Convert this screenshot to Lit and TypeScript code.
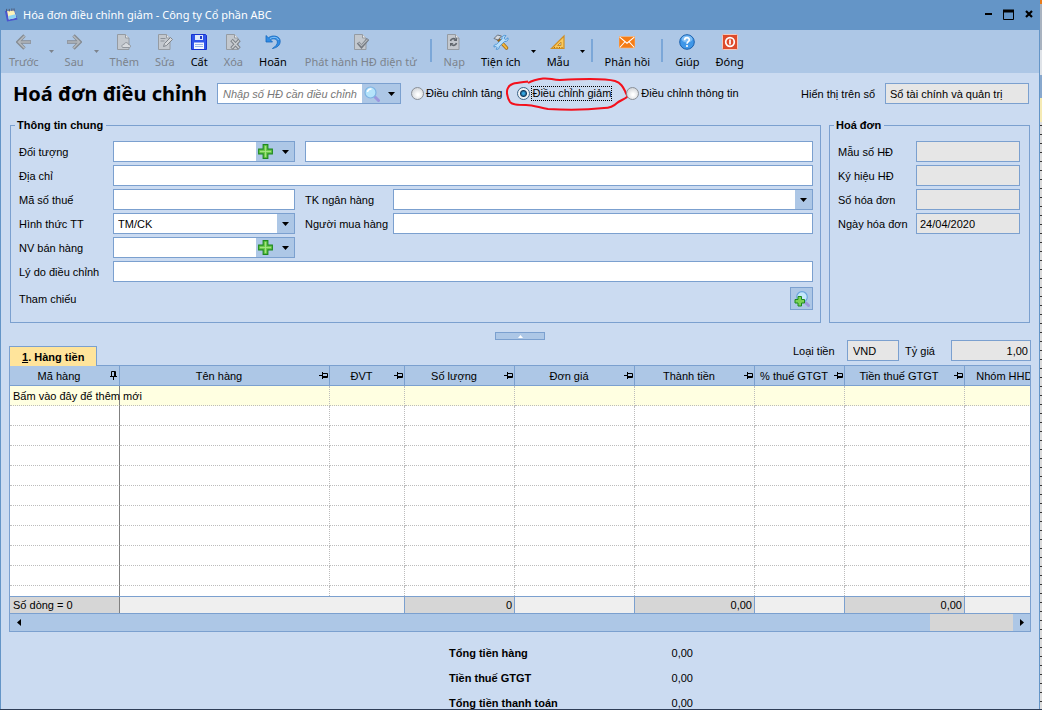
import { LitElement, html, svg, css, nothing, TemplateResult } from "lit";
import { customElement, state } from "lit/decorators.js";
import { classMap } from "lit/directives/class-map.js";

type Pic = TemplateResult;

const icon = (body: unknown, size = 16): Pic =>
  html`<svg class="icon" width=${size} height=${size} viewBox="0 0 16 16" aria-hidden="true">${body}</svg>`;

const page = svg`<path d="M1.500.5h8l3.500 3.500v11.500H1.500z" fill="#c3c8ce" stroke="#959ba2"/><path d="M9.500.5v3.500h3.500" fill="#e8eaec" stroke="#959ba2"/>`;

const pictures: Record<string, Pic> = {
  back: icon(svg`<path d="M8.500 1.500 2 8l6.500 6.500M2.500 8H15" fill="none" stroke="#858b92" stroke-width="3.400"/><path d="M8.500 2 2.500 8l6 6M3 8h11.500" fill="none" stroke="#b3b8bd" stroke-width="1.600"/>`),
  next: icon(svg`<path d="M7.500 1.500 14 8l-6.500 6.500M13.500 8H1" fill="none" stroke="#858b92" stroke-width="3.400"/><path d="M7.500 2l6 6-6 6M13 8H1.500" fill="none" stroke="#b3b8bd" stroke-width="1.600"/>`),
  add: icon(svg`${page}<path d="M6.500 13.500c-1.500-2 .5-3.500 1.500-3 .5-2.500 4-2.500 4.500 0 2.500 0 2.500 3 1 3z" fill="#d7dade" stroke="#8f959c"/>`),
  edit: icon(svg`${page}<path d="M3.500 4.500h5M3.500 7h4" stroke="#8b9199"/><path d="m6.500 12.500 1-3 6-6 2 2-6 6z" fill="#d5d8db" stroke="#7f858c"/>`),
  save: icon(svg`<path d="M.5.500h14l1 1v14H.5z" fill="#2f55ea" stroke="#1733d0"/><path d="M4 1h8v5H4z" fill="#dfe9fb"/><path d="M9 2h2v3H9z" fill="#2340c8"/><path d="M3 8.500h10V15H3z" fill="#f4f7fd"/><path d="M4 10.500h8M4 12.500h8" stroke="#9bb4e6"/>`),
  remove: icon(svg`${page}<path d="m6.500 6 8 8.500M14.500 6l-8 8.500" stroke="#7d838a" stroke-width="3.400"/><path d="m7 6.500 7 7.500M14 6.500 7 14" stroke="#ccd0d3" stroke-width="1.400"/>`),
  undo: icon(svg`<path d="M1 1.500v6.500h6.500L5.400 5.800c3-2 7-.8 7 2.200 0 2.400-1.600 4.300-5 6.500 5-.8 7.800-3.500 7.800-7.200C15.200 2.200 8.200.3 3.300 3.700z" fill="#2f8ce6" stroke="#1768bd" stroke-width=".8"/><path d="M5 4.500c3.500-2 7.500-1.500 8.500 1.500" fill="none" stroke="#8cc8fa"/>`),
  publish: icon(svg`${page}<path d="m5 8.500 3.500 4L15 5" fill="none" stroke="#747a81" stroke-width="3.200"/><path d="m5.500 8.500 3 3.200L14.500 5.500" fill="none" stroke="#b6bbc0" stroke-width="1.200"/>`),
  reload: icon(svg`${page}<path d="M4.500 7C5 4.500 8 4 9.500 5.500M10.500 9c-.5 2.500-3.500 3-5 1.500" fill="none" stroke="#5f656c" stroke-width="1.600"/><path d="M11 3.500v3.500H7.500zM4 12.500V9h3.500z" fill="#5f656c"/>`),
  tools: icon(svg`<path d="m5 5 8.500 9" stroke="#9a6410" stroke-width="3.400" stroke-linecap="round"/><path d="m8 8 5.500 6" stroke="#f2b63c" stroke-width="2" stroke-linecap="round"/><path d="M1 4.500 4.500 1l4 1-3.500 4z" fill="#d6d9de" stroke="#6b7480"/><path d="M15 3.800 12.600 5.700 11 4.200 13 1.500c-2.500-.8-4.600 1.200-4 3.500L3.500 10.300c-1.500-.3-3 1-2.500 2.800l1.700-.8 1.500 1.500-1 1.500c2 .6 3.300-1 3-2.600L11.500 7.500c2.300.5 4.200-1.300 3.500-3.700z" fill="#b8defa" stroke="#3d8bd0" stroke-width=".8"/>`),
  ruler: icon(svg`<path d="M1.500 14.500 14 2v12.500z" fill="#f9c95e" stroke="#cf8f24" stroke-width="1.200"/><path d="M7.500 11.500 11 8v3.500z" fill="#adc8e6" stroke="#cf8f24"/><path d="M4.500 14v-1M7 14v-1M9.500 14v-1M12 14v-1" stroke="#a66c12"/>`),
  mail: icon(svg`<path d="M0 2.500h16v11.500H0z" fill="#f57c14" stroke="#f8c08c" stroke-width=".6"/><path d="m.7 3.200 7.300 6 7.300-6M.7 13.500l5-5.500M15.300 13.500l-5-5.500" fill="none" stroke="#fff" stroke-width="1.100"/>`),
  help: icon(svg`<circle cx="8" cy="8" r="7.300" fill="#3f97e8" stroke="#1a60ad"/><ellipse cx="8" cy="5" rx="5.500" ry="3.500" fill="#7dbdf5"/><path d="M5.600 6.200C5.700 2.700 10.500 3 10.300 6 10.200 7.600 8 7.700 8 9.800" fill="none" stroke="#fff" stroke-width="1.700"/><circle cx="8" cy="12" r="1.100" fill="#fff"/>`),
  close: icon(svg`<rect x=".5" y=".5" width="15" height="15" rx="1" fill="#dd4b2c" stroke="#f5c9bc"/><circle cx="8" cy="8" r="4.300" fill="none" stroke="#fff" stroke-width="1.700"/><path d="M8 5.500v5" stroke="#fff" stroke-width="1.700"/>`),
  plus: icon(svg`<path d="M5.500.7h5v4.800h4.800v5h-4.800v4.800h-5v-4.800H.7v-5h4.800z" fill="#6cc94a" stroke="#1d8a1d" stroke-width="1.200"/><path d="M8 2v12M2 8h12" stroke="#a4e585"/>`, 15),
  search: icon(svg`<path d="m10.500 10.500 4 4" stroke="#9c97dd" stroke-width="3" stroke-linecap="round"/><circle cx="6.500" cy="6.500" r="5.500" fill="#b4e3fb" stroke="#7cb2e2" stroke-width="1.200"/><path d="M3.500 6a3.500 3.500 0 0 1 4-3" fill="none" stroke="#fff" stroke-width="1.600"/>`),
  searchAdd: icon(svg`<path d="m12 12 2.500 2.500" stroke="#9c97dd" stroke-width="3" stroke-linecap="round"/><circle cx="8" cy="6" r="5.300" fill="#c4e7fb" stroke="#6ba6dc" stroke-width="1.200"/><path d="M4 5.500h3.500v3h3V12h-3v3H4v-3H1V8.500h3z" fill="#7bd255" stroke="#1d8a1d"/>`),
  app: icon(svg`<path d="m1 3.500 10.500-1.500 4 11-12 2.500z" fill="#4a55cf"/><path d="m3.500 3.500 8-1 2.500 8.500-8.500 2z" fill="#fff3b8"/><path d="m5 9 8-2 1 4-8.500 2z" fill="#8dd3f5"/><path d="M3 4V1M6 4V1M9 3.500v-3M11.500 3.500v-3" stroke="#4a4f63"/>`, 14),
};

const caret = html`<svg class="caret" width="7" height="4" viewBox="0 0 7 4" aria-hidden="true"><path d="M0 0h7L3.500 4z" fill="currentColor"/></svg>`;
const pinUp = html`<svg class="pin" width="9" height="9" viewBox="0 0 9 9" aria-hidden="true"><path d="M2.500 5V.5h4V5M5.500 0v5M1 5.500h7M4.500 6v3" fill="none" stroke="#000"/></svg>`;
const pinSide = html`<svg class="pin" width="9" height="7" viewBox="0 0 9 7" aria-hidden="true"><path d="M4 1.500h4.500v4H4M4 4.500h4.500M3.500 0v7M0 3.500h3" fill="none" stroke="#000"/></svg>`;

interface Tool { text: string; pic: string; off?: boolean; menu?: boolean; rule?: boolean; long?: boolean }
const tools: Tool[] = [
  { text: "Trước", pic: "back", off: true, menu: true },
  { text: "Sau", pic: "next", off: true, menu: true },
  { text: "Thêm", pic: "add", off: true },
  { text: "Sửa", pic: "edit", off: true },
  { text: "Cất", pic: "save" },
  { text: "Xóa", pic: "remove", off: true },
  { text: "Hoãn", pic: "undo" },
  { text: "Phát hành HĐ điện tử", pic: "publish", off: true, rule: true, long: true },
  { text: "Nạp", pic: "reload", off: true },
  { text: "Tiện ích", pic: "tools", menu: true },
  { text: "Mẫu", pic: "ruler", menu: true, rule: true },
  { text: "Phản hồi", pic: "mail", rule: true },
  { text: "Giúp", pic: "help" },
  { text: "Đóng", pic: "close" },
];

const columns = [
  { text: "Mã hàng", width: 110 },
  { text: "Tên hàng", width: 210 },
  { text: "ĐVT", width: 75 },
  { text: "Số lượng", width: 110 },
  { text: "Đơn giá", width: 120 },
  { text: "Thành tiền", width: 120 },
  { text: "% thuế GTGT", width: 90 },
  { text: "Tiền thuế GTGT", width: 120 },
  { text: "Nhóm HHDV", width: 98 },
];

const totals = [
  ["Tổng tiền hàng", "0,00"],
  ["Tiền thuế GTGT", "0,00"],
  ["Tổng tiền thanh toán", "0,00"],
];

const modes = ["Điều chỉnh tăng", "Điều chỉnh giảm", "Điều chỉnh thông tin"];

@customElement("app-root")
export class AppRoot extends LitElement {
  @state() private mode = 1;

  static styles = css`
    :host {
      display: flex;
      height: 100vh;
      box-sizing: border-box;
      border-bottom: 1px solid #2f3d57;
      overflow: hidden;
      font: 11px/14px "Liberation Sans", Arial, sans-serif;
      color: #000;
      --line: #7ba0cf;
      --bar: #adc7e6;
      --frame: #6495c7;
    }
    *, *::before { box-sizing: border-box; }
    button, input, select { font: inherit; color: inherit; margin: 0; border-radius: 0; }
    button { border: 0; padding: 0; background: none; white-space: nowrap; }
    svg { display: block; flex: none; }
    .window {
      flex: 1;
      min-width: 0;
      display: flex;
      flex-direction: column;
      background: #cbdbf1;
      border: solid var(--frame);
      border-width: 0 1px;
      overflow: hidden;
    }
    .behind {
      flex: none;
      width: 2px;
      background:
        linear-gradient(#e87c1c 0 4px, #a9b3c0 4px 50px, #dfe3e8 50px 75px, #88a8cd 75px 98px, #f5eab4 98px 122px, transparent 122px),
        repeating-linear-gradient(#ddd 0 8px, #333 8px 9px);
    }
    .titlebar {
      flex: none;
      height: 30px;
      padding: 0 4px 0 3px;
      display: flex;
      align-items: center;
      gap: 5px;
      background: var(--frame);
      color: #fff;
      font: 11px/16px "Noto Sans", sans-serif;
    }
    .titlebar h1 { flex: 1; margin: 0; font: inherit; }
    .winbtns { display: flex; gap: 8px; }
    .toolbar {
      flex: none;
      height: 43px;
      display: flex;
      background: var(--bar);
      font: 11px/16px "Noto Sans", sans-serif;
    }
    .tool {
      padding: 4px 8px 2px;
      display: flex;
      flex-direction: column;
      align-items: center;
      gap: 4px;
    }
    .long { padding: 4px 10px 2px; }
    .off { color: #7c838c; }
    .drop { width: 10px; display: flex; align-items: center; justify-content: center; }
    .drop .caret { width: 5px; height: 3px; }
    .rule { flex: none; width: 2px; height: 23px; margin: 9px 4px 0 3px; background: #7ba7d8; }
    .content { flex: 1; min-height: 0; padding: 0 8px; display: flex; flex-direction: column; }
    .head { flex: none; display: flex; align-items: center; height: 45px; padding: 0 2px 4px 4px; }
    .head h2 { margin: 0; width: 204px; font: bold 20px/26px "Noto Sans", sans-serif; white-space: nowrap; }
    .box {
      width: 100%;
      min-width: 0;
      height: 21px;
      border: 1px solid var(--line);
      padding: 0 3px;
      background: #fff;
      outline: 0;
    }
    .locked { background: #e6e6e6; }
    .num { text-align: right; padding-right: 2px; }
    .combo { display: flex; height: 21px; min-width: 0; border: 1px solid var(--line); background: #fff; }
    .combo input { flex: 1; min-width: 0; border: 0; padding: 0 5px; outline: 0; background: none; }
    .combo button { flex: none; display: flex; align-items: center; justify-content: center; width: 17px; background: var(--bar); }
    .combo .wide { width: 21px; padding-right: 2px; }
    .find { width: 184px; margin-right: 10px; }
    .find input { font-style: italic; padding: 0 0 0 5px; }
    .find input::placeholder { color: #777; opacity: 1; }
    .pick { display: grid; grid-template-columns: 1fr 18px; min-width: 0; }
    .pick select { grid-area: 1 / 1 / 2 / 3; appearance: none; padding-left: 4px; }
    .pick .arrow {
      grid-area: 1 / 2;
      margin: 1px 1px 1px 0;
      display: flex;
      align-items: center;
      justify-content: center;
      background: var(--bar);
      pointer-events: none;
    }
    .modes { display: flex; flex: 1; gap: 14px; }
    .mode { position: relative; display: flex; align-items: center; gap: 1px; white-space: nowrap; }
    .mode input {
      appearance: none;
      width: 13px;
      height: 13px;
      border: 1px solid #8a8f96;
      border-radius: 50%;
      background: radial-gradient(circle at 55% 60%, #fff 10%, #c9cdd2 90%);
      outline: 0;
    }
    .mode input:checked { background: radial-gradient(circle, #35a6e0 0 1px, #123a5e 3px, #eef2f6 4px); border-color: #3c6487; }
    .mode span { border: 1px dotted transparent; line-height: 13px; }
    .mode.on span { border-color: #000; }
    .ring { position: absolute; left: -11px; top: -9px; pointer-events: none; }
    .book { display: flex; align-items: center; gap: 10px; }
    .book .box { width: 144px; padding-left: 4px; }
    .groups { flex: none; margin: 0 1px; display: grid; grid-template-columns: 1fr 201px; gap: 8px; }
    fieldset { min-width: 0; margin: 0; border: 1px solid var(--line); padding: 8px 7px 12px 8px; }
    legend { margin-left: -4px; padding: 0 3px 0 2px; font-weight: bold; line-height: 15px; }
    .form { display: grid; grid-template-columns: 94px 182px 10px 88px 1fr; grid-auto-rows: 21px; gap: 3px 0; align-items: center; }
    .info { display: grid; grid-template-columns: 78px 1fr; grid-auto-rows: 21px; gap: 3px 0; align-items: center; padding-right: 2px; }
    .all { grid-column: 2 / -1; }
    .two { grid-column: 4 / -1; }
    .gap { grid-column: 4; }
    .first { grid-column: 1; }
    .ref { display: flex; align-items: center; justify-content: space-between; margin-top: 5px; }
    .ref button { width: 23px; height: 23px; display: flex; align-items: center; justify-content: center; border: 1px solid var(--line); background: var(--bar); }
    .middle { flex: none; height: 42px; display: grid; grid-template-columns: 1fr 50px 1fr; align-items: end; }
    .fold { align-self: start; height: 8px; margin-top: 9px; border: 1px solid var(--line); background: var(--bar); display: flex; align-items: center; justify-content: center; }
    .tab { position: relative; justify-self: start; height: 20px; margin-bottom: -1px; padding: 0 12px; border: 1px solid var(--line); border-bottom: 0; background: #ffe49b; font-weight: bold; }
    .money { display: flex; align-items: center; justify-content: flex-end; margin-bottom: 4px; }
    .money label { width: 54px; }
    .money .rate { width: 46px; margin-left: 6px; }
    .money .cur { width: 52px; padding-left: 5px; }
    .money .val { width: 80px; }
    .grid { flex: 1; min-height: 0; display: flex; flex-direction: column; border: 1px solid var(--line); background: #fff; overflow: hidden; }
    .rows { flex: 1; min-height: 0; overflow: hidden; }
    .sum { flex: none; overflow: hidden; border: solid var(--line); border-width: 1px 0; }
    table { table-layout: fixed; border-spacing: 0; width: 100%; min-width: 1053px; white-space: nowrap; }
    th, td { padding: 0; height: 20px; font-weight: normal; }
    th { border-right: 1px solid var(--line); border-bottom: 1px solid var(--line); background: var(--bar); }
    .th { display: flex; align-items: center; }
    .th span { flex: 1; }
    .th .pin { width: 11px; }
    td { border-right: 1px dotted #bcbcbc; border-bottom: 1px dotted #bcbcbc; }
    td:first-child { border-right: 1px solid #808080; padding-left: 3px; }
    .new { background: #ffffe1; }
    .sum td { height: 16px; line-height: 16px; border-bottom: 0; border-right: 1px solid var(--line); background: #efefef; }
    .sum td.calc, .sum td:first-child { background: #d6d6d6; }
    .sum td:first-child { border-right-color: #808080; }
    .scroll { flex: none; height: 17px; display: flex; background: var(--bar); }
    .scroll button { width: 17px; display: flex; align-items: center; justify-content: center; }
    .track { flex: 1; display: flex; justify-content: flex-end; }
    .thumb { width: 83px; background: #d6d6d6; }
    .totals { flex: none; margin: 8px 0 -6px 440px; display: grid; grid-template-columns: 160px 84px; grid-auto-rows: 25px; align-items: center; }
    .totals dt { font-weight: bold; white-space: nowrap; }
    .totals dd { margin: 0; text-align: right; }
  `;

  private tool(t: Tool) {
    return html`<button class=${classMap({ tool: true, off: !!t.off, long: !!t.long })} ?disabled=${t.off}>${pictures[t.pic]}<span>${t.text}</span></button>
      ${t.menu ? html`<button class=${classMap({ drop: true, off: !!t.off })} aria-label=${t.text + " – danh sách"}>${caret}</button>` : nothing}
      ${t.rule ? html`<span class="rule"></span>` : nothing}`;
  }

  private lookup(id: string) {
    return html`<div class="combo"><input id=${id}><button class="wide" aria-label="Thêm mới">${pictures.plus}</button><button aria-label="Chọn">${caret}</button></div>`;
  }

  private choice(id: string, value: string) {
    return html`<div class="pick"><select class="box" id=${id}><option>${value}</option></select><span class="arrow">${caret}</span></div>`;
  }

  private locked(id: string, label: string, value = "") {
    return html`<label for=${id}>${label}</label><input class="box locked" id=${id} .value=${value} readonly>`;
  }

  private cols() {
    return html`<colgroup>${columns.map((c, i) => (i === columns.length - 1 ? html`<col>` : html`<col style="width:${c.width}px">`))}</colgroup>`;
  }

  render() {
    return html`
      <main class="window">
        <header class="titlebar">
          ${pictures.app}
          <h1>Hóa đơn điều chỉnh giảm - Công ty Cổ phần ABC</h1>
          <div class="winbtns">
            <button aria-label="Thu nhỏ"><svg width="12" height="12" viewBox="0 0 12 12"><path d="M2 5h7" stroke="#000" stroke-width="2"/></svg></button>
            <button aria-label="Phóng to"><svg width="12" height="12" viewBox="0 0 12 12"><path d="M.5 2h10v8.500H.5z" fill="none" stroke="#000"/><path d="M0 2h11" stroke="#000" stroke-width="3"/></svg></button>
            <button aria-label="Đóng cửa sổ"><svg width="12" height="12" viewBox="0 0 12 12"><path d="m3 2 6 6M9 2 3 8" stroke="#000" stroke-width="2.200"/></svg></button>
          </div>
        </header>
        <nav class="toolbar">${tools.map((t) => this.tool(t))}</nav>
        <div class="content">
          <div class="head">
            <h2>Hoá đơn điều chỉnh</h2>
            <div class="combo find">
              <input aria-label="Số hóa đơn" placeholder="Nhập số HĐ cần điều chỉnh">
              <button class="wide" aria-label="Tìm">${pictures.search}</button><button aria-label="Chọn">${caret}</button>
            </div>
            <div class="modes">
              ${modes.map((m, i) => html`<label class=${classMap({ mode: true, on: i === this.mode })}>
                <input type="radio" name="mode" .checked=${i === this.mode} @change=${() => (this.mode = i)}><span>${m}</span>
                ${i === 1 ? html`<svg class="ring" width="124" height="34" viewBox="0 0 124 34" aria-hidden="true"><path d="M22 6C27 3 33 2 37 1.500 44 .8 46 3 54 3c18-1 44-2 55 1 6 2 8 6 10 10 1 3 3 5 2 6-2 2-8 4-10 6-4 4-9 5-13 5-18 2-38 2-56 1-8-1-14-4-22-4-8 0-14 0-16-3C1 20 0 14 2 11 4 6 10 6 22 4.500" fill="none" stroke="#f4101c" stroke-width="2"/></svg>` : nothing}
              </label>`)}
            </div>
            <div class="book"><label for="book">Hiển thị trên sổ</label><input class="box locked" id="book" value="Sổ tài chính và quản trị" readonly></div>
          </div>
          <div class="groups">
            <fieldset>
              <legend>Thông tin chung</legend>
              <div class="form">
                <label for="party">Đối tượng</label>${this.lookup("party")}<input class="box two" aria-label="Tên đối tượng">
                <label for="addr">Địa chỉ</label><input class="box all" id="addr">
                <label for="tax">Mã số thuế</label><input class="box" id="tax">
                <label class="gap" for="bank">TK ngân hàng</label>${this.choice("bank", "")}
                <label for="pay">Hình thức TT</label>${this.choice("pay", "TM/CK")}
                <label class="gap" for="buyer">Người mua hàng</label><input class="box" id="buyer">
                <label for="staff">NV bán hàng</label>${this.lookup("staff")}
                <label class="first" for="why">Lý do điều chỉnh</label><input class="box all" id="why">
              </div>
              <div class="ref"><span>Tham chiếu</span><button aria-label="Thêm tham chiếu">${pictures.searchAdd}</button></div>
            </fieldset>
            <fieldset>
              <legend>Hoá đơn</legend>
              <div class="info">
                ${this.locked("form", "Mẫu số HĐ")}${this.locked("sign", "Ký hiệu HĐ")}
                ${this.locked("no", "Số hóa đơn")}${this.locked("date", "Ngày hóa đơn", "24/04/2020")}
              </div>
            </fieldset>
          </div>
          <div class="middle">
            <button class="tab"><u>1</u>. Hàng tiền</button>
            <button class="fold" aria-label="Thu gọn"><svg width="5" height="3" viewBox="0 0 5 3"><path d="M0 3h5L2.500 0z" fill="#fff"/></svg></button>
            <div class="money">
              <label for="cur">Loại tiền</label><input class="box locked cur" id="cur" value="VND" readonly>
              <label class="rate" for="rate">Tỷ giá</label><input class="box locked num val" id="rate" value="1,00" readonly>
            </div>
          </div>
          <section class="grid">
            <div class="rows">
              <table>
                ${this.cols()}
                <thead><tr>${columns.map((c, i) => html`<th><div class="th"><span>${c.text}</span>${i ? pinSide : pinUp}</div></th>`)}</tr></thead>
                <tbody>
                  <tr class="new">${columns.map((_, i) => html`<td>${i ? nothing : "Bấm vào đây để thêm mới"}</td>`)}</tr>
                  ${Array.from({ length: 10 }, () => html`<tr>${columns.map(() => html`<td></td>`)}</tr>`)}
                </tbody>
              </table>
            </div>
            <div class="sum">
              <table>
                ${this.cols()}
                <tbody><tr>
                  <td>Số dòng = 0</td><td colspan="2"></td><td class="num calc">0</td><td></td>
                  <td class="num calc">0,00</td><td></td><td class="num calc">0,00</td><td></td>
                </tr></tbody>
              </table>
            </div>
            <div class="scroll">
              <button aria-label="Cuộn trái"><svg width="4" height="7" viewBox="0 0 4 7"><path d="M4 0v7L0 3.500z"/></svg></button>
              <div class="track"><div class="thumb"></div></div>
              <button aria-label="Cuộn phải"><svg width="4" height="7" viewBox="0 0 4 7"><path d="M0 0v7l4-3.500z"/></svg></button>
            </div>
          </section>
          <dl class="totals">${totals.map(([k, v]) => html`<dt>${k}</dt><dd>${v}</dd>`)}</dl>
        </div>
      </main>
      <div class="behind"></div>`;
  }
}
